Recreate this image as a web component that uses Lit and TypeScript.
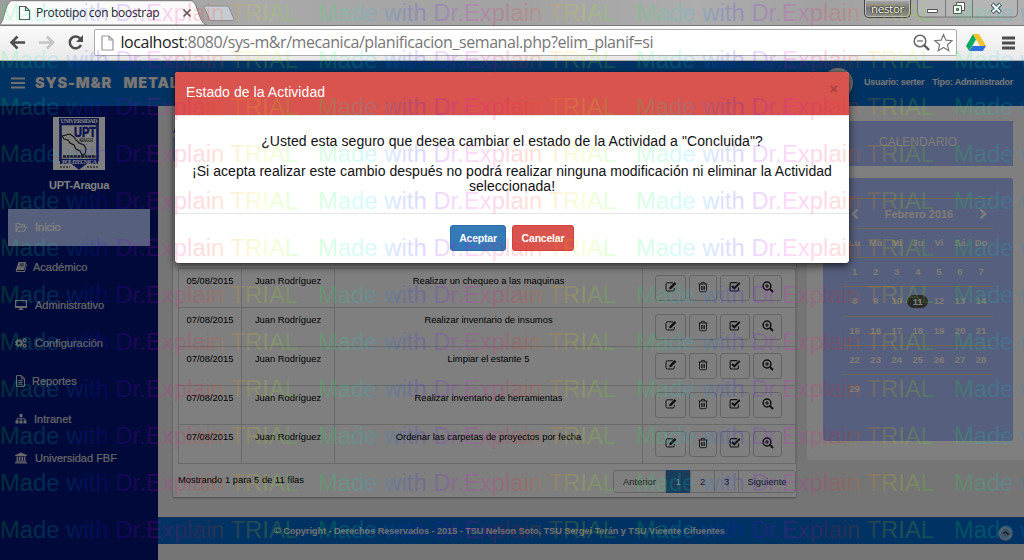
import { LitElement, html, svg, css } from "lit";
import { customElement } from "lit/decorators.js";

const menu = [
  { icon: "folder", label: "Inicio", gap: 8, active: true },
  { icon: "book", label: "Académico", gap: 6 },
  { icon: "desktop", label: "Administrativo", gap: 8 },
  { icon: "cogs", label: "Configuración", gap: 8 },
  { icon: "file", label: "Reportes", gap: 5 },
  { icon: "sitemap", label: "Intranet", gap: 7 },
  { icon: "bank", label: "Universidad FBF", gap: 8 },
];

const rows = [
  ["05/08/2015", "Juan Rodríguez", "Realizar un chequeo a las maquinas"],
  ["07/08/2015", "Juan Rodríguez", "Realizar inventario de insumos"],
  ["07/08/2015", "Juan Rodríguez", "Limpiar el estante 5"],
  ["07/08/2015", "Juan Rodríguez", "Realizar inventario de herramientas"],
  ["07/08/2015", "Juan Rodríguez", "Ordenar las carpetas de proyectos por fecha"],
];

const weeks = [
  ["Lu", "Ma", "Mi", "Ju", "Vi", "Sá", "Do"],
  ["1", "2", "3", "4", "5", "6", "7"],
  ["8", "9", "10", "11", "12", "13", "14"],
  ["15", "16", "17", "18", "19", "20", "21"],
  ["22", "23", "24", "25", "26", "27", "28"],
  ["29", "", "", "", "", "", ""],
];

const glyphs: Record<string, unknown> = {
  folder: svg`<path d="M1 10V2.5h3.2l1 1.3h4.3v2M1 10.2 3.2 6h8.2L9.3 10.2z" fill="none" stroke="currentColor" stroke-width="1.1"/>`,
  book: svg`<path d="M3.6 1h7.6L9 9H2.2c-.6.6 0 1 .5 1h6.6l2-7 .6.4-2 7.6H2C.7 11 .6 9.6 1 8.6z" fill="currentColor"/><path d="M5 3h4M4.5 4.8h4" stroke="#001474" stroke-width=".8"/>`,
  desktop: svg`<path d="M.6 1.5h10.8v7H.6z" fill="none" stroke="currentColor" stroke-width="1.2"/><path d="M.5 7h11v1.8H.5zM5 8h2l.5 2.4H9V11H3v-.6h1.5z" fill="currentColor"/>`,
  cogs: svg`<circle cx="4" cy="6" r="2.4" fill="none" stroke="currentColor" stroke-width="1.8"/><circle cx="4" cy="6" r="3.7" fill="none" stroke="currentColor" stroke-width="1" stroke-dasharray="1.6 1.3"/><circle cx="9.7" cy="3.2" r="1.4" fill="none" stroke="currentColor" stroke-width="1.3"/><circle cx="9.7" cy="8.8" r="1.4" fill="none" stroke="currentColor" stroke-width="1.3"/>`,
  file: svg`<path d="M1.5.6h5l3 3v7.8h-8zM6.4.8v3h3M3.4 5.6h4.2M3.4 7.4h4.2M3.4 9.2h4.2" fill="none" stroke="currentColor" stroke-width="1"/>`,
  sitemap: svg`<path d="M4.5 1h3v3h-3zM.5 7.5h3v3h-3zM4.5 7.5h3v3h-3zM8.5 7.5h3v3h-3z" fill="currentColor"/><path d="M6 3.5v4M2 8V5.8h8V8" fill="none" stroke="currentColor" stroke-width=".9"/>`,
  bank: svg`<path d="M6 .4 11.8 3v.9H.2V3zM1.6 4.4h1.6v4.2H1.6zM4 4.4h1.5v4.2H4zM6.5 4.4H8v4.2H6.5zM8.8 4.4h1.6v4.2H8.8zM.8 8.8h10.4v.9H.8zM0 10.2h12v1.2H0z" fill="currentColor"/>`,
  edit: svg`<path d="M8 1.8H2.4C1.5 1.8 1 2.3 1 3.1v5.6C1 9.5 1.5 10 2.4 10H8c.8 0 1.3-.5 1.3-1.3V7" fill="none" stroke="currentColor" stroke-width="1"/><path d="m4.2 8.2.3-2L9.6 1l1.8 1.7L6.2 8z" fill="currentColor"/>`,
  trash: svg`<path d="M1.5 3h9M4 3l.6-1.6h2.8L8 3M2.5 3v6.7c0 .6.4 1 1 1h5c.6 0 1-.4 1-1V3M4.6 5v4M6 5v4M7.4 5v4" fill="none" stroke="currentColor" stroke-width=".9"/>`,
  check: svg`<path d="M8.4 1.6H2.5c-.9 0-1.4.5-1.4 1.3v5.8c0 .8.5 1.3 1.4 1.3h5.6c.9 0 1.4-.5 1.4-1.3V6.6" fill="none" stroke="currentColor" stroke-width="1.1"/><path d="m3 5 2.3 2.3L10.8 1.9" fill="none" stroke="currentColor" stroke-width="2"/>`,
  search: svg`<circle cx="5" cy="5" r="3.9" fill="none" stroke="currentColor" stroke-width="1.5"/><path d="m8 8 3 3" stroke="currentColor" stroke-width="2"/><path d="M3 5h4M5 3v4" stroke="currentColor" stroke-width="1.1"/>`,
};

const glyph = (name: string) =>
  html`<svg class="glyph" viewBox="0 0 12 12" width="12" height="12">${glyphs[name]}</svg>`;

@customElement("browser-bar")
class BrowserBar extends LitElement {
  static styles = css`
    :host { display: block; height: 61px; font-family: "Open Sans", "Noto Sans", sans-serif; }
    .strip { display: flex; height: 25px; position: relative; background: linear-gradient(90deg, #9d9d9d, #a9a9a9 25%, #a2a2a2 50%, #adadad 68%, #a1a1a1 80%, #b0b0b0); }
    .shape { position: absolute; left: 0; top: 0; }
    .title { position: relative; display: flex; align-items: center; padding-left: 36px; height: 25px; width: 144px; font-size: 12px; letter-spacing: -0.3px; color: #222; white-space: nowrap; }
    .controls { display: flex; position: absolute; top: 0; right: 6px; gap: 6px; }
    .user { box-sizing: border-box; width: 47px; height: 18px; border: 1px solid #444; border-top: 0; border-radius: 0 0 5px 5px; background: linear-gradient(#aaa, #777 50%, #8f8f8f); box-shadow: inset 0 0 0 1px #bbb; color: #fff; font: 11.5px/17px "Open Sans", sans-serif; letter-spacing: -0.3px; text-align: center; text-shadow: 0 0 2px #000, 0 0 1px #000; }
    .bar { display: flex; box-sizing: border-box; height: 36px; padding: 4px 9px 5px 10px; align-items: center; background: linear-gradient(#fafafa, #e9e9e9); border-top: 1px solid #777; border-bottom: 1px solid #aeaeae; }
    .nav { flex: none; width: 84px; height: 26px; }
    .url { flex: none; box-sizing: border-box; display: flex; align-items: center; width: 863px; height: 27px; border: 1px solid #ababab; border-radius: 2px; background: #fff; padding: 0 3px 0 6px; font-size: 16px; color: #777; white-space: nowrap; letter-spacing: -0.43px; }
    .url b { font-weight: 400; color: #222; }
    .address { flex: 1; padding-left: 5.5px; margin-top: -1px; }
    .tail { flex: 1; height: 26px; }
  `;
  render() {
    return html`
      <div class="strip">
        <svg class="shape" width="240" height="25" viewBox="0 0 240 25">
          <path d="M-1 25C4 24 5 3 11 .7H191c7 0 7 23 16 24.3z" fill="#fafafa" stroke="#777" stroke-width="1" />
          <path d="M205 6h21c2 0 3 1 3.600 3l4 9c.7 1.600 0 2.600-1.500 2.600h-20c-2 0-2.600-1-3.300-3l-4-9C203.400 7 204 6 205 6z" fill="#c7ccd2" stroke="#8c8c8c" />
          <path d="M19.500 6.500h6l4 4v9h-10zM25.500 6.500v4h4" fill="#fff" stroke="#555" stroke-width="1.200" />
          <path d="m183.500 9.500 7 7m0-7-7 7" stroke="#555" stroke-width="1.500" />
        </svg>
        <div class="title">Prototipo con boostrap</div>
        <div class="controls">
          <div class="user">nestor</div>
          <svg width="101" height="18" viewBox="0 0 101 18">
            <path d="M.5 0v13q0 4 4 4h92q4 0 4-4V0M28.500 0v17M55.500 0v17" fill="#b5b5b5" stroke="#777" />
            <path d="M10.500 9.500h10v3h-10z" fill="#fff" stroke="#555" />
            <path d="M39.500 2.500h8v8h-8z" fill="#fff" stroke="#555" />
            <path d="M36.500 5.500h8v8h-8z" fill="#fff" stroke="#555" /><path d="M39.500 8.500h2v2h-2z" fill="#999" stroke="#555" />
            <path d="m75 4 8.500 8.500m0-8.500L75 12.500" stroke="#4d5560" stroke-width="4.200" /><path d="m75.500 4.500 7.500 7.500m0-7.500L75.500 12" stroke="#fff" stroke-width="2" />
          </svg>
        </div>
      </div>
      <div class="bar">
        <svg class="nav" viewBox="0 0 84 26">
          <path d="M15 12.500H2M7.500 6.500l-6 6 6 6" fill="none" stroke="#4d4d4d" stroke-width="2.600" />
          <path d="M29 12.500h13M37 6.500l6 6-6 6" fill="none" stroke="#c4c4c4" stroke-width="2.600" />
          <path d="M70.500 9A5.900 5.900 0 1 0 71 15" fill="none" stroke="#4d4d4d" stroke-width="2.500" /><path d="M73 5v7h-7z" fill="#4d4d4d" />
        </svg>
        <div class="url">
          <svg width="14" height="18" viewBox="0 0 14 18"><path d="M1 2h7l4 4v10H1zM8 2v4h4" fill="#fff" stroke="#999" stroke-width="1.200" /></svg>
          <div class="address"><b>localhost</b>:8080/sys-m&amp;r/mecanica/planificacion_semanal.php?elim_planif=si</div>
          <svg width="42" height="24" viewBox="0 0 42 24">
            <circle cx="9" cy="10" r="5.800" fill="none" stroke="#666" stroke-width="1.500" /><path d="M6 10h6" stroke="#666" stroke-width="1.200" /><path d="m13 14 5 5" stroke="#555" stroke-width="2.400" />
            <path d="m32.500 3.500 2.400 5.700 6.200.500-4.700 4 1.400 6-5.300-3.200-5.300 3.200 1.400-6-4.700-4 6.200-.500z" fill="none" stroke="#777" stroke-width="1.200" />
          </svg>
        </div>
        <svg class="tail" viewBox="0 0 58 26">
          <path d="m16 4-7 12 3.200 5 6.800-11.600z" fill="#0da960" /><path d="M16 4h6l7 12h-6z" fill="#f5c330" /><path d="M15.500 16H29l-3.200 5H12.200z" fill="#2d6fdd" />
          <path d="M45 8h13M45 13h13M45 18h13" stroke="#4d4d4d" stroke-width="3" />
        </svg>
      </div>`;
  }
}

@customElement("trial-mark")
class TrialMark extends LitElement {
  static styles = css`
    :host { display: block; pointer-events: none; }
    .sheet { display: block; opacity: 0.145; }
    .words { font: 23.74px "Liberation Sans", Arial, sans-serif; }
  `;
  render() {
    const stops = Array.from({ length: 13 }, (_, i) =>
      svg`<stop offset=${i / 12} stop-color=${`hsl(${(130 + i * 30) % 360},100%,50%)`}/>`);
    const words = [];
    for (let r = 0; r < 12; r++)
      for (let c = 0; c < 4; c++)
        words.push(svg`<text x=${c * 318} y=${21 + r * 47} textLength="298" fill="url(#hues)">Made with Dr.Explain TRIAL</text>`);
    return html`<svg class="sheet words" width="1024" height="560">
      <defs><linearGradient id="hues" gradientUnits="userSpaceOnUse" x1="0" y1="0" x2="318" y2="0" spreadMethod="repeat">${stops}</linearGradient></defs>
      ${words}
    </svg>`;
  }
}

@customElement("app-root")
class AppRoot extends LitElement {
  static styles = css`
    :host { display: block; position: relative; width: 1024px; height: 560px; overflow: hidden; font-family: "Liberation Sans", Arial, sans-serif; }
    .page { position: relative; height: 499px; display: grid; grid-template: 45px 1fr / 158px 1fr; background: #eaeaea; }
    .glyph { display: block; flex: none; }
    .header { grid-column: 1 / 3; display: flex; align-items: center; padding: 0 11px 2px; background: #0066c6; color: #eee; }
    .brand { font: 900 14.5px Inter, "Liberation Sans", sans-serif; letter-spacing: 0.85px; word-spacing: 2px; color: #f4ece6; margin-left: 10px; white-space: pre; flex: 1; }
    .avatar { width: 30px; height: 30px; margin-right: 11px; }
    .who { font-size: 9px; font-weight: 700; color: #eee; display: flex; gap: 8px; white-space: nowrap; letter-spacing: -0.25px; margin-top: -2px; }
    .side { background: #001474; display: flex; flex-direction: column; }
    .crest { display: block; margin: 11px auto 0; }
    .school { text-align: center; font: 700 11px/14px "Liberation Sans", sans-serif; letter-spacing: -0.3px; color: #fff; margin: 8px 0 17px; }
    .item { box-sizing: border-box; display: flex; align-items: center; height: 38.2px; margin: 0 8px; padding-left: 7px; font-size: 11px; color: #d0d0d0; -webkit-text-stroke: 0.2px #d0d0d0; }
    .active { background: #adbff8; height: 37px; color: #fff; -webkit-text-stroke: 0.3px #fff; padding-bottom: 2px; margin-bottom: 1.5px; }
    .main { display: grid; grid-template: 411px 27px / 638px 1fr; }
    .left { padding: 0 0 0 15px; }
    .panel { box-sizing: border-box; height: 391px; background: #fff; box-shadow: 0 1px 2px #999; display: flex; flex-direction: column; font-size: 9.4px; color: #000; }
    .heading { height: 31px; color: #0066c6; font-size: 16px; line-height: 44px; }
    .filter { height: 24px; background: #adbfff; margin-bottom: 107px; flex: none; }
    .table { margin-left: 5px; border: 1px solid #d4d4d4; border-width: 1px 1px 0 1px; flex: none; }
    .row { display: grid; grid-template-columns: 63px 93px 308px 1fr; height: 39px; box-sizing: border-box; border-bottom: 1px solid #d4d4d4; }
    .cell { border-right: 1px solid #d4d4d4; text-align: center; padding-top: 6px; line-height: 11px; white-space: nowrap; }
    .tools { display: flex; gap: 3px; padding: 6px 0 0 12px; }
    .tool { box-sizing: border-box; height: 26px; border: 1px solid #ccc; border-radius: 3px; display: flex; align-items: center; justify-content: center; color: #222; padding-bottom: 2px; }
    .w0 { width: 31px; } .w1 { width: 28px; } .w2 { width: 30px; } .w3 { width: 29px; }
    .foot { display: flex; justify-content: space-between; padding: 6px 0 0 5px; }
    .count { line-height: 20px; }
    .pages { display: flex; height: 23px; box-sizing: border-box; border: 1px solid #ccc; border-radius: 3px; line-height: 22px; color: #236; }
    .page-link { border-left: 1px solid #ccc; text-align: center; box-sizing: border-box; width: 24px; }
    .prev { width: 51px; color: #444; border: 0; }
    .next { width: 57px; }
    .on { background: #337ab7; color: #fff; margin: -1px 0; width: 25px; line-height: 24px; }
    .right { margin-left: 11px; background: #fff; height: 354px; padding: 15px 11px 0 16px; box-sizing: border-box; }
    .banner { height: 45px; background: #adbffa; color: #fff6ee; font-size: 12px; line-height: 43px; text-align: center; margin-bottom: 12px; }
    .calendar { height: 263px; box-sizing: border-box; background: #adbffa; border-radius: 3px; padding: 20px 20px 0; color: #fff6ee; font-size: 9.5px; font-weight: 700; }
    .month { display: flex; align-items: center; justify-content: space-between; padding: 0 6px 0 8px; height: 29px; border-top: 1px solid #d8ceae; font-size: 11px; }
    .week { display: grid; grid-template-columns: repeat(7, 21.1px); padding-left: 1px; height: 28.2px; border-top: 1px solid #d8ceae; text-align: center; line-height: 27px; }
    .today { justify-self: center; align-self: center; width: 21px; height: 13px; line-height: 13px; border-radius: 7px; background: #555; color: #fff; }
    .footer { grid-column: 1 / 3; background: #0066c6; color: #e0e0e0; font-size: 9.2px; letter-spacing: -0.07px; font-weight: 700; display: flex; align-items: center; padding: 0 11px 0 116px; justify-content: space-between; white-space: nowrap; }
    .top { margin-top: 5px; }
    .shade { position: absolute; inset: 61px 0 0 0; background: rgba(0, 0, 0, 0.5); }
    .modal { position: absolute; left: 175px; top: 72px; width: 674px; height: 191px; background: #fff; border-radius: 3px; box-shadow: 0 3px 9px rgba(0, 0, 0, 0.65), 0 0 1px #000; overflow: hidden; display: flex; flex-direction: column; }
    .modal-head { box-sizing: border-box; height: 43px; flex: none; background: #d9534f; color: #fff; display: flex; justify-content: space-between; padding: 12px 11px 0 11px; font-size: 14px; line-height: 17px; letter-spacing: 0.06px; }
    .close { color: #ae423f; margin-top: -4px; font-size: 15px; font-weight: 700; }
    .modal-body { box-sizing: border-box; height: 99px; border-top: 1px solid #e5e5e5; border-bottom: 1px solid #e5e5e5; padding: 18px 15px 0; text-align: center; font-size: 14px; line-height: 15px; letter-spacing: 0.04px; color: #111; }
    .ask { margin: 0 0 15px; }
    .first { letter-spacing: 0.08px; }
    .actions { display: flex; justify-content: center; gap: 6px; padding-top: 11px; }
    .btn { box-sizing: border-box; height: 26px; line-height: 24px; text-align: center; font-size: 10.5px; font-weight: 700; color: #fff; border-radius: 3px; letter-spacing: -0.2px; }
    .ok { width: 56px; background: #337ab7; border: 1px solid #2e6da4; }
    .no { width: 62px; background: #d9534f; border: 1px solid #d43f3a; }
    .mark { position: absolute; inset: 0; }
    .tiny { font: 700 6.2px "Liberation Serif", serif; }
    .crest-name { font: 700 15px "Liberation Sans", sans-serif; }
  `;

  crest() {
    return html`<svg class="crest" width="52" height="53" viewBox="0 0 52 53">
      <path d="M0 0h52v53H0z" fill="#fff" />
      <path d="M7.500 7v36h8l10.500 8 10.500-8h8V7z" fill="#fff" stroke="#1b2c9a" stroke-width="2.600" />
      <path d="M6 1h40v6H6zM7 42h38v5H33l-7 5-7-5H7z" fill="#1b2c9a" />
      <text class="tiny" x="7.500" y="6.300" textLength="37" fill="#fff">UNIVERSIDAD</text>
      <text class="crest-name" x="21" y="19.500" textLength="22" lengthAdjust="spacingAndGlyphs" fill="#1b2c9a" stroke="#1b2c9a" stroke-width=".7">UPT</text>
      <text class="tiny" x="26" y="25" textLength="14" lengthAdjust="spacingAndGlyphs" fill="#111">ARAGUA</text>
      <path d="m9 19 4-1 4-1 4 3 2 3 3 3 5 2 2 4-1 5-3 1-2-4-4-2-2-4-4-2-2-3-4-1z" fill="#fff" stroke="#222" stroke-width="1.100" />
      <path d="M10 39.500h33" stroke="#333" stroke-width="2.400" stroke-dasharray="3 .6" />
      <text class="tiny" x="9" y="46.700" textLength="35" fill="#fff">POLITECNICA</text>
      <path d="M7 50h10M34 50h11" stroke="#888" stroke-width="2" stroke-dasharray="2 1" />
    </svg>`;
  }

  render() {
    return html`
      <browser-bar></browser-bar>
      <div class="page">
        <div class="header">
          <svg width="14" height="12" viewBox="0 0 14 12"><path d="M0 1.500h14M0 6h14M0 10.500h14" stroke="#e0e0e0" stroke-width="2.200" /></svg>
          <div class="brand">SYS-M&amp;R  METALMECANICA</div>
          <svg class="avatar" viewBox="0 0 30 30"><circle cx="15" cy="15" r="15" fill="#ddd" /><circle cx="15" cy="12" r="6" fill="#444" /><path d="M5 25q10-12 20 0-10 9-20 0" fill="#555" /></svg>
          <div class="who"><span>Usuario: serter</span><span>Tipo: Administrador</span></div>
        </div>
        <div class="side">
          ${this.crest()}
          <div class="school">UPT-Aragua</div>
          ${menu.map((m) => html`<div class="item ${m.active ? "active" : ""}">${glyph(m.icon)}<span style="margin-left:${m.gap}px">${m.label}</span></div>`)}
        </div>
        <div class="main">
          <div class="left">
            <div class="panel">
              <div class="heading">Actividades</div>
              <div class="filter"></div>
              <div class="table">
                ${rows.map((r) => html`<div class="row">
                  ${r.map((t) => html`<div class="cell">${t}</div>`)}
                  <div class="tools">${["edit", "trash", "check", "search"].map((n, i) => html`<div class="tool w${i}">${glyph(n)}</div>`)}</div>
                </div>`)}
              </div>
              <div class="foot">
                <div class="count">Mostrando 1 para 5 de 11 filas</div>
                <div class="pages">
                  <div class="page-link prev">Anterior</div><div class="page-link on">1</div><div class="page-link">2</div><div class="page-link">3</div><div class="page-link next">Siguiente</div>
                </div>
              </div>
            </div>
          </div>
          <div class="right">
            <div class="banner">CALENDARIO</div>
            <div class="calendar">
              <div class="month">
                <svg width="8" height="12" viewBox="0 0 8 12"><path d="M6.500 1.500 2 6l4.500 4.500" fill="none" stroke="#fff" stroke-width="2.400" /></svg>
                <span>Febrero 2016</span>
                <svg width="8" height="12" viewBox="0 0 8 12"><path d="M1.500 1.500 6 6l-4.500 4.500" fill="none" stroke="#fff" stroke-width="2.400" /></svg>
              </div>
              ${weeks.map((w) => html`<div class="week">${w.map((d) => html`<span class=${d === "11" ? "today" : "day"}>${d}</span>`)}</div>`)}
            </div>
          </div>
          <div class="footer">
            <span>© Copyright - Derechos Reservados - 2015 - TSU Nelson Soto, TSU Sergei Terán y TSU Vicente Cifuentes</span>
            <svg class="top" width="15" height="15" viewBox="0 0 15 15"><circle cx="7.500" cy="7.500" r="7.200" fill="#9fb6d8" /><circle cx="7.500" cy="7.500" r="4.500" fill="#7f93b8" /><path d="m4.500 8 3-2.500 3 3" fill="none" stroke="#234" stroke-width="1.200" /></svg>
          </div>
        </div>
      </div>
      <div class="shade"></div>
      <div class="modal">
        <div class="modal-head"><span>Estado de la Actividad</span><span class="close">×</span></div>
        <div class="modal-body">
          <p class="ask first">¿Usted esta seguro que desea cambiar el estado de la Actividad a "Concluida"?</p>
          <p class="ask">¡Si acepta realizar este cambio después no podrá realizar ninguna modificación ni eliminar la Actividad seleccionada!</p>
        </div>
        <div class="actions"><div class="btn ok">Aceptar</div><div class="btn no">Cancelar</div></div>
      </div>
      <trial-mark class="mark"></trial-mark>`;
  }
}
